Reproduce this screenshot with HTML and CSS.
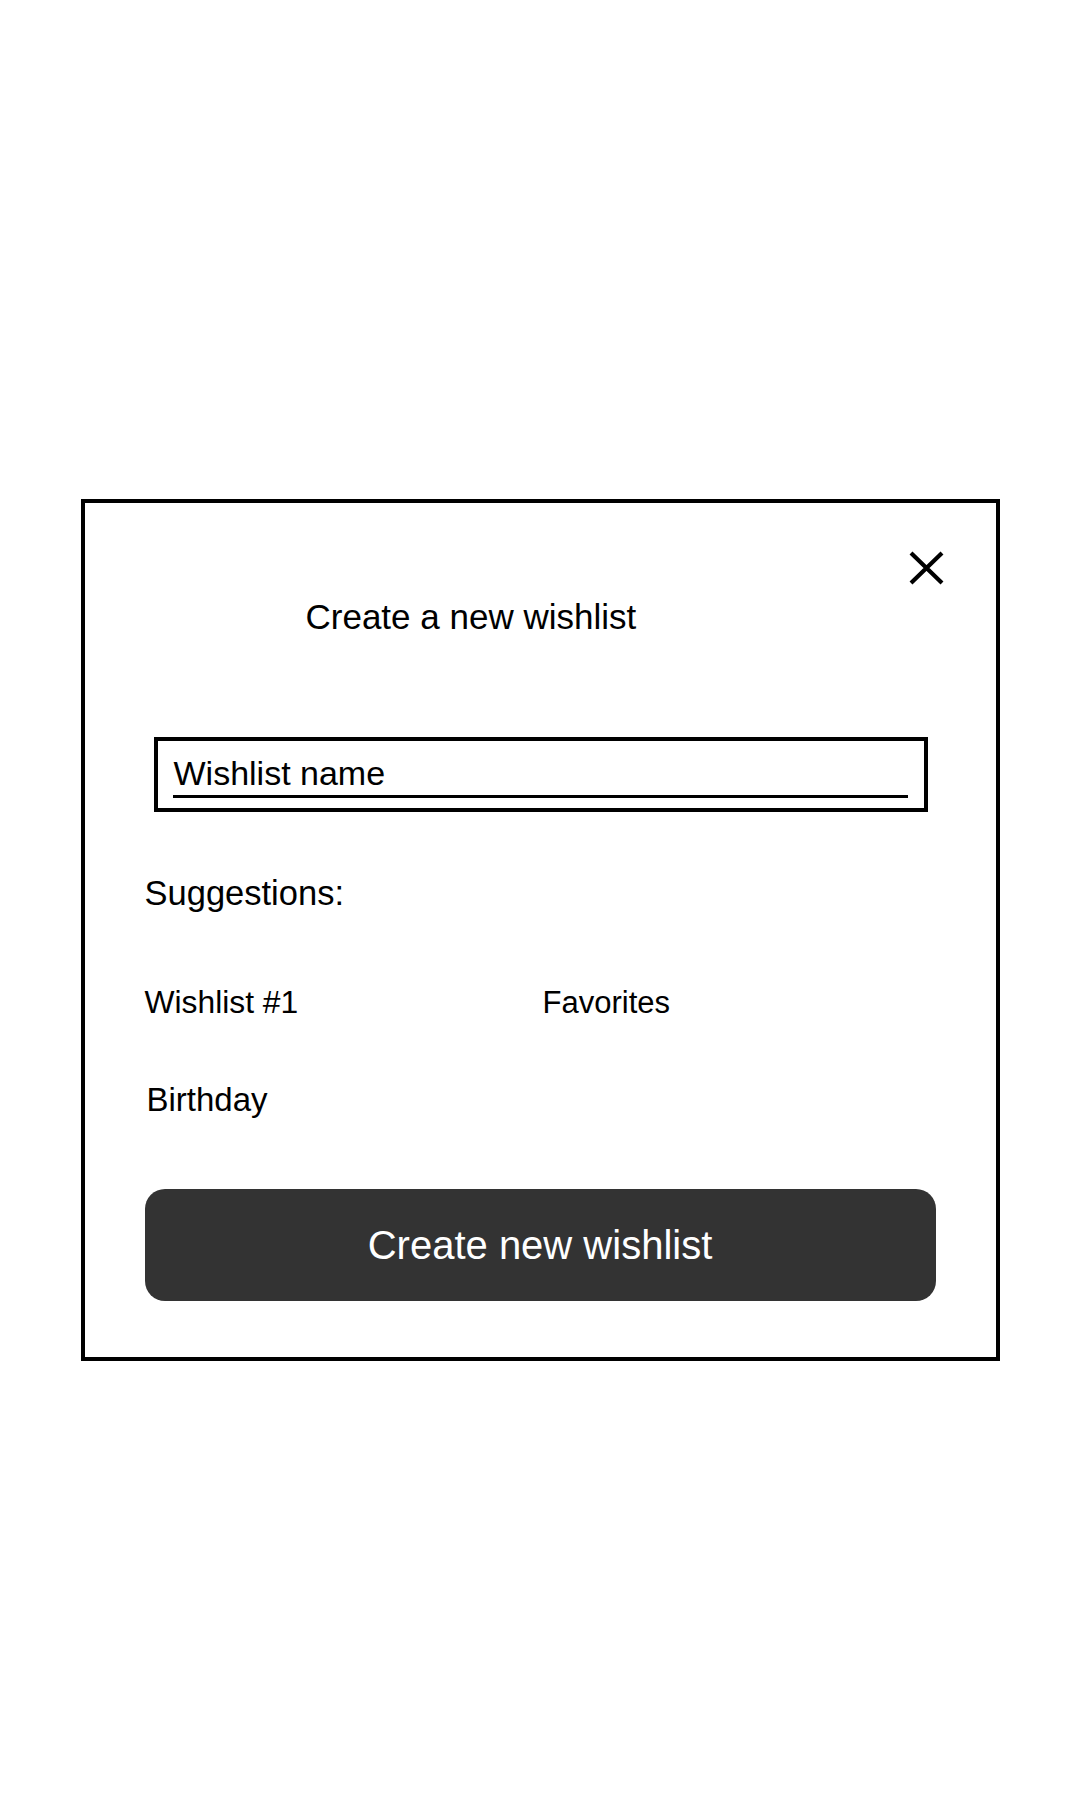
FILE: index.html
```html
<!DOCTYPE html>
<html lang="en">
<head>
<meta charset="utf-8">
<title>Create a new wishlist</title>
<link rel="stylesheet" href="styles.css">
</head>
<body>
<div class="page">
  <div class="modal">
    <button class="close" aria-label="Close">
      <svg width="35" height="34" viewBox="0 0 35 34"><path d="M2 2 L33 32 M33 2 L2 32" stroke="#000" stroke-width="4.2" fill="none"/></svg>
    </button>
    <h1 class="title">Create a new wishlist</h1>
    <div class="field">
      <div class="field-inner">Wishlist name</div>
    </div>
    <div class="label">Suggestions:</div>
    <div class="suggestions">
      <div class="sugg sugg-w">Wishlist #1</div>
      <div class="sugg sugg-f">Favorites</div>
      <div class="sugg sugg-b">Birthday</div>
    </div>
    <button class="create">Create new wishlist</button>
  </div>
</div>
</body>
</html>
```

FILE: styles.css
```css
* { box-sizing: border-box; }
html, body { margin: 0; padding: 0; background: #ffffff; }
body {
  font-family: "Liberation Sans", Arial, sans-serif;
  color: #000;
  width: 1080px;
  height: 1800px;
}
.page { padding-top: 499px; }
.modal {
  position: relative;
  width: 919px;
  margin: 0 auto;
  border: 4px solid #000;
  padding: 97px 60px 56px 60px;
  display: flex;
  flex-direction: column;
}
.close {
  position: absolute;
  top: 48px;
  right: 52px;
  width: 35px;
  height: 34px;
  padding: 0;
  border: 0;
  background: none;
  display: block;
}
.close svg { display: block; }
.title {
  margin: 0;
  padding-left: 161px;
  font-size: 35px;
  line-height: 34px;
  font-weight: normal;
}
.field {
  margin: 103px 8px 0 9px;
  border: 4px solid #000;
  padding: 15px 16px 10px 15px;
}
.field-inner {
  font-size: 34px;
  line-height: 34px;
  padding-left: 1px;
  padding-bottom: 5px;
  border-bottom: 3px solid #000;
}
.label {
  margin-top: 64px;
  font-size: 34.5px;
  line-height: 34px;
}
.suggestions {
  margin-top: 77px;
  display: grid;
  grid-template-columns: 398px 1fr;
  row-gap: 66px;
}
.sugg {
  font-size: 31.8px;
  line-height: 31px;
}
.sugg-f { font-size: 31px; }
.sugg-b {
  font-size: 33px;
  line-height: 32px;
  padding-left: 2px;
}
.create {
  margin-top: 73px;
  height: 112px;
  width: 100%;
  border: 0;
  border-radius: 20px;
  background: #333333;
  color: #ffffff;
  font-family: "Liberation Sans", Arial, sans-serif;
  font-size: 40px;
  line-height: 40px;
  padding: 0;
}
```
